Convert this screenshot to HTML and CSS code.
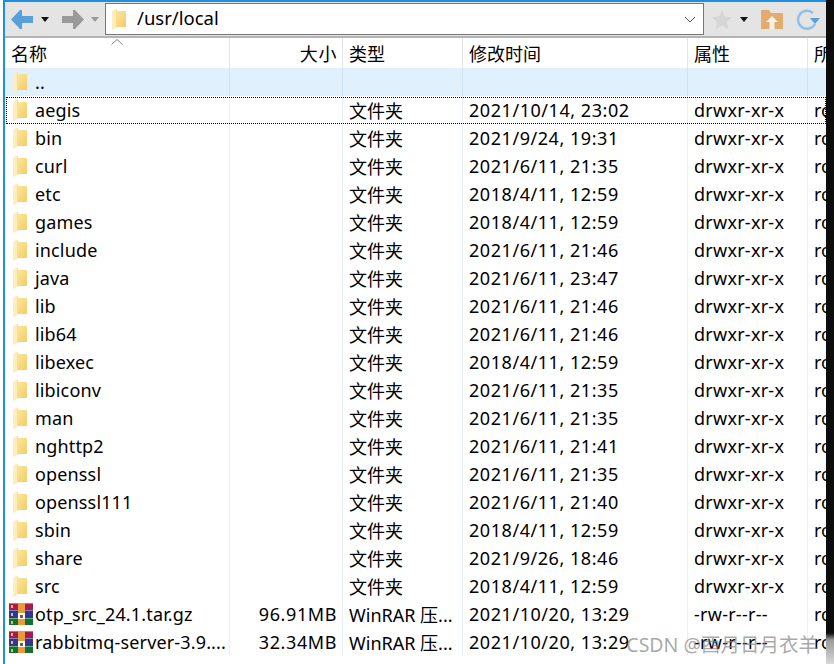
FILE: index.html
```html
<!DOCTYPE html>
<html lang="zh-CN">
<head>
    <meta charset="UTF-8">
    <meta name="viewport" content="width=device-width, initial-scale=1.0">
    <title>/usr/local</title>
    <link rel="stylesheet" href="styles.css">
</head>
<body>
    <svg class="defs" width="0" height="0">
        <defs>
            <linearGradient id="folder-fill" x1="0" y1="0" x2="1" y2="1">
                <stop offset="0" stop-color="#fce79c"/>
                <stop offset="1" stop-color="#f3cc68"/>
            </linearGradient>
            <symbol id="folder" viewBox="0 0 14 21">
                <path d="M4 2 L13 2 Q14 2 14 3 L14 17 Q14 18 13 18 L4 18 Z" fill="url(#folder-fill)"/>
                <path d="M0 2 L3 0 L5 0 L5 18 L1 21 L0 21 Z" fill="#fdeebc"/>
                <path d="M4 1 L5 0 L5 18 L4 19 Z" fill="#f8dc90"/>
            </symbol>
            <symbol id="rar" viewBox="0 0 24 22">
                <rect x="0" y="0" width="24" height="7" fill="#a81c4c"/>
                <rect x="0" y="0" width="24" height="1" fill="#d66a86"/>
                <rect x="0" y="7" width="24" height="8" fill="#35358f"/>
                <rect x="0" y="7" width="24" height="1" fill="#7d7dca"/>
                <rect x="0" y="15" width="24" height="7" fill="#137035"/>
                <rect x="0" y="15" width="24" height="1" fill="#63b57e"/>
                <rect x="2" y="2" width="2" height="3" fill="#f2b84b"/>
                <rect x="2" y="10" width="2" height="3" fill="#f2b84b"/>
                <rect x="2" y="18" width="2" height="3" fill="#f2b84b"/>
                <rect x="9" y="0" width="7" height="22" fill="#e89a3c"/>
                <rect x="9" y="10" width="7" height="6" fill="#fff"/>
                <rect x="11" y="12" width="3" height="3" fill="#7a5a3a"/>
            </symbol>
        </defs>
    </svg>

    <div class="window">
        <div class="toolbar">
            <svg class="nav-arrow" viewBox="0 0 22 19"><path d="M0 9.500 L9 0 L11 0 L11 6 L22 6 L22 13 L11 13 L11 19 L9 19 Z" fill="#5b9fd8"/></svg>
            <span class="caret"></span>
            <svg class="nav-arrow forward" viewBox="0 0 22 19"><path d="M22 9.500 L13 0 L11 0 L11 6 L0 6 L0 13 L11 13 L11 19 L13 19 Z" fill="#9a9a9a"/></svg>
            <span class="caret caret-off"></span>
            <div class="address">
                <svg class="icon-folder"><use href="#folder"/></svg>
                <span class="path">/usr/local</span>
                <svg class="chevron" viewBox="0 0 12 7"><path d="M1 1 L6 6 L11 1" fill="none" stroke="#555" stroke-width="1"/></svg>
            </div>
            <svg class="star" viewBox="0 0 20 19"><path d="M10 0 L13 6.500 L20 7.300 L15 12 L16.300 19 L10 15.500 L3.700 19 L5 12 L0 7.300 L7 6.500 Z" fill="#d6d6d6"/></svg>
            <span class="caret caret-star"></span>
            <svg class="folder-up" viewBox="0 0 22 19"><path d="M0 0 L8 0 L10 3 L22 3 L22 19 L0 19 Z" fill="#e2ac6e"/><path d="M11 6 L17 12 L13.500 12 L13.500 19 L8.500 19 L8.500 12 L5 12 Z" fill="#f7f0e6"/></svg>
            <svg class="refresh" viewBox="0 0 24 21"><path d="M17 4 A9 9 0 1 0 19 15" fill="none" stroke="#8fc0ea" stroke-width="2.500"/><path d="M14 9 L24 9 L19 15 Z" fill="#5b9fd8"/></svg>
        </div>

        <div class="row head">
            <div class="cell">名称<svg class="sort" viewBox="0 0 12 6"><path d="M0.500 5.500 L6 0.500 L11.500 5.500" fill="none" stroke="#888"/></svg></div>
            <div class="cell size">大小</div>
            <div class="cell">类型</div>
            <div class="cell">修改时间</div>
            <div class="cell">属性</div>
            <div class="cell">所有者</div>
        </div>

        <div class="row parent">
            <div class="cell name"><svg class="icon-folder"><use href="#folder"/></svg>..</div>
            <div class="cell size"></div><div class="cell"></div><div class="cell"></div><div class="cell"></div><div class="cell"></div>
        </div>
        <div class="row selected">
            <div class="cell name"><svg class="icon-folder"><use href="#folder"/></svg>aegis</div>
            <div class="cell size"></div><div class="cell">文件夹</div><div class="cell">2021/10/14, 23:02</div><div class="cell">drwxr-xr-x</div><div class="cell">root</div>
        </div>
        <div class="row">
            <div class="cell name"><svg class="icon-folder"><use href="#folder"/></svg>bin</div>
            <div class="cell size"></div><div class="cell">文件夹</div><div class="cell">2021/9/24, 19:31</div><div class="cell">drwxr-xr-x</div><div class="cell">root</div>
        </div>
        <div class="row">
            <div class="cell name"><svg class="icon-folder"><use href="#folder"/></svg>curl</div>
            <div class="cell size"></div><div class="cell">文件夹</div><div class="cell">2021/6/11, 21:35</div><div class="cell">drwxr-xr-x</div><div class="cell">root</div>
        </div>
        <div class="row">
            <div class="cell name"><svg class="icon-folder"><use href="#folder"/></svg>etc</div>
            <div class="cell size"></div><div class="cell">文件夹</div><div class="cell">2018/4/11, 12:59</div><div class="cell">drwxr-xr-x</div><div class="cell">root</div>
        </div>
        <div class="row">
            <div class="cell name"><svg class="icon-folder"><use href="#folder"/></svg>games</div>
            <div class="cell size"></div><div class="cell">文件夹</div><div class="cell">2018/4/11, 12:59</div><div class="cell">drwxr-xr-x</div><div class="cell">root</div>
        </div>
        <div class="row">
            <div class="cell name"><svg class="icon-folder"><use href="#folder"/></svg>include</div>
            <div class="cell size"></div><div class="cell">文件夹</div><div class="cell">2021/6/11, 21:46</div><div class="cell">drwxr-xr-x</div><div class="cell">root</div>
        </div>
        <div class="row">
            <div class="cell name"><svg class="icon-folder"><use href="#folder"/></svg>java</div>
            <div class="cell size"></div><div class="cell">文件夹</div><div class="cell">2021/6/11, 23:47</div><div class="cell">drwxr-xr-x</div><div class="cell">root</div>
        </div>
        <div class="row">
            <div class="cell name"><svg class="icon-folder"><use href="#folder"/></svg>lib</div>
            <div class="cell size"></div><div class="cell">文件夹</div><div class="cell">2021/6/11, 21:46</div><div class="cell">drwxr-xr-x</div><div class="cell">root</div>
        </div>
        <div class="row">
            <div class="cell name"><svg class="icon-folder"><use href="#folder"/></svg>lib64</div>
            <div class="cell size"></div><div class="cell">文件夹</div><div class="cell">2021/6/11, 21:46</div><div class="cell">drwxr-xr-x</div><div class="cell">root</div>
        </div>
        <div class="row">
            <div class="cell name"><svg class="icon-folder"><use href="#folder"/></svg>libexec</div>
            <div class="cell size"></div><div class="cell">文件夹</div><div class="cell">2018/4/11, 12:59</div><div class="cell">drwxr-xr-x</div><div class="cell">root</div>
        </div>
        <div class="row">
            <div class="cell name"><svg class="icon-folder"><use href="#folder"/></svg>libiconv</div>
            <div class="cell size"></div><div class="cell">文件夹</div><div class="cell">2021/6/11, 21:35</div><div class="cell">drwxr-xr-x</div><div class="cell">root</div>
        </div>
        <div class="row">
            <div class="cell name"><svg class="icon-folder"><use href="#folder"/></svg>man</div>
            <div class="cell size"></div><div class="cell">文件夹</div><div class="cell">2021/6/11, 21:35</div><div class="cell">drwxr-xr-x</div><div class="cell">root</div>
        </div>
        <div class="row">
            <div class="cell name"><svg class="icon-folder"><use href="#folder"/></svg>nghttp2</div>
            <div class="cell size"></div><div class="cell">文件夹</div><div class="cell">2021/6/11, 21:41</div><div class="cell">drwxr-xr-x</div><div class="cell">root</div>
        </div>
        <div class="row">
            <div class="cell name"><svg class="icon-folder"><use href="#folder"/></svg>openssl</div>
            <div class="cell size"></div><div class="cell">文件夹</div><div class="cell">2021/6/11, 21:35</div><div class="cell">drwxr-xr-x</div><div class="cell">root</div>
        </div>
        <div class="row">
            <div class="cell name"><svg class="icon-folder"><use href="#folder"/></svg>openssl111</div>
            <div class="cell size"></div><div class="cell">文件夹</div><div class="cell">2021/6/11, 21:40</div><div class="cell">drwxr-xr-x</div><div class="cell">root</div>
        </div>
        <div class="row">
            <div class="cell name"><svg class="icon-folder"><use href="#folder"/></svg>sbin</div>
            <div class="cell size"></div><div class="cell">文件夹</div><div class="cell">2018/4/11, 12:59</div><div class="cell">drwxr-xr-x</div><div class="cell">root</div>
        </div>
        <div class="row">
            <div class="cell name"><svg class="icon-folder"><use href="#folder"/></svg>share</div>
            <div class="cell size"></div><div class="cell">文件夹</div><div class="cell">2021/9/26, 18:46</div><div class="cell">drwxr-xr-x</div><div class="cell">root</div>
        </div>
        <div class="row">
            <div class="cell name"><svg class="icon-folder"><use href="#folder"/></svg>src</div>
            <div class="cell size"></div><div class="cell">文件夹</div><div class="cell">2018/4/11, 12:59</div><div class="cell">drwxr-xr-x</div><div class="cell">root</div>
        </div>
        <div class="row">
            <div class="cell name file"><svg class="icon-rar"><use href="#rar"/></svg>otp_src_24.1.tar.gz</div>
            <div class="cell size">96.91MB</div><div class="cell">WinRAR 压...</div><div class="cell">2021/10/20, 13:29</div><div class="cell">-rw-r--r--</div><div class="cell">root</div>
        </div>
        <div class="row">
            <div class="cell name file"><svg class="icon-rar"><use href="#rar"/></svg>rabbitmq-server-3.9....</div>
            <div class="cell size">32.34MB</div><div class="cell">WinRAR 压...</div><div class="cell">2021/10/20, 13:29</div><div class="cell">-rw-r--r--</div><div class="cell">root</div>
        </div>
    </div>
    <div class="edge"></div>
    <div class="watermark">CSDN @酉月日月衣羊</div>
</body>
</html>
```

FILE: styles.css
```css
* {
    box-sizing: border-box;
}

body {
    margin: 0;
    display: flex;
    height: 664px;
    overflow: hidden;
    background-color: white;
    color: #000;
    font-family: "Noto Sans", "Noto Sans CJK SC", sans-serif;
    font-size: 18px;
}

.defs {
    position: absolute;
}

.window {
    flex: 1;
    min-width: 0;
    margin-left: 3px;
    border-left: 2px solid #1e8fe0;
    border-top: 2px solid #1e8fe0;
    overflow: hidden;
}

.edge {
    width: 8px;
    background: linear-gradient(#0c0c0c 0, #0c0c0c 633px, #9a9a9a 640px, #d8d8d8 100%);
}

/* toolbar */
.toolbar {
    display: flex;
    align-items: center;
    height: 36px;
    background-color: #e4e4e4;
    border-bottom: 2px solid #b4b4b4;
    padding-left: 6px;
}

.nav-arrow {
    width: 22px;
    height: 19px;
}

.forward {
    margin-left: 13px;
}

.caret {
    width: 0;
    height: 0;
    margin-left: 8px;
    border-left: 4px solid transparent;
    border-right: 4px solid transparent;
    border-top: 5px solid #111;
}

.caret-off {
    margin-left: 7px;
    border-top-color: #999;
}

.caret-star {
    margin-left: 8px;
}

.address {
    display: flex;
    align-items: center;
    width: 599px;
    height: 32px;
    margin-left: 6px;
    padding-left: 6px;
    background-color: white;
    border: 1px solid #777;
}

.path {
    flex: 1;
    margin-left: 3px;
    padding-bottom: 3px;
    font-size: 18.500px;
}

.chevron {
    width: 12px;
    height: 7px;
    margin-right: 7px;
}

.star {
    width: 20px;
    height: 19px;
    margin-left: 8px;
}

.folder-up {
    width: 22px;
    height: 19px;
    margin-left: 13px;
}

.refresh {
    width: 24px;
    height: 21px;
    margin-left: 13px;
}

/* list */
.row {
    display: grid;
    grid-template-columns: 225px 113px 120px 225px 120px 40px;
    height: 28px;
}

.head {
    height: 30px;
}

.cell {
    display: flex;
    align-items: center;
    padding-left: 6px;
    border-right: 1px solid #e8f0f8;
    white-space: nowrap;
    overflow: hidden;
}

.row:not(.head) .cell:nth-child(4) {
    letter-spacing: 0.55px;
}

.row:not(.head) .cell:nth-child(5) {
    letter-spacing: 0.25px;
}

.head .cell {
    position: relative;
    border-right-color: #e4e4e4;
}

.size {
    justify-content: flex-end;
    padding-left: 0;
    padding-right: 5px;
    letter-spacing: 0.6px;
}

.name {
    padding-left: 8px;
    letter-spacing: 0.15px;
}

.file {
    padding-left: 4px;
}

.parent {
    background-color: #e1f0fd;
}

.parent .cell {
    border-right-color: #cde3f7;
}

.selected {
    position: relative;
}

.selected::before {
    content: "";
    position: absolute;
    top: 1px;
    left: 1px;
    right: 0;
    bottom: 0;
    border: 1px dotted #000;
}

.icon-folder {
    flex: none;
    width: 14px;
    height: 21px;
    margin-right: 8px;
}

.icon-rar {
    flex: none;
    width: 24px;
    height: 22px;
    margin-right: 2px;
}

.sort {
    position: absolute;
    left: 106px;
    top: 1px;
    width: 12px;
    height: 6px;
}

.watermark {
    position: absolute;
    right: 16px;
    bottom: 6px;
    color: rgba(130, 130, 130, 0.7);
    font-size: 19.500px;
}
```
